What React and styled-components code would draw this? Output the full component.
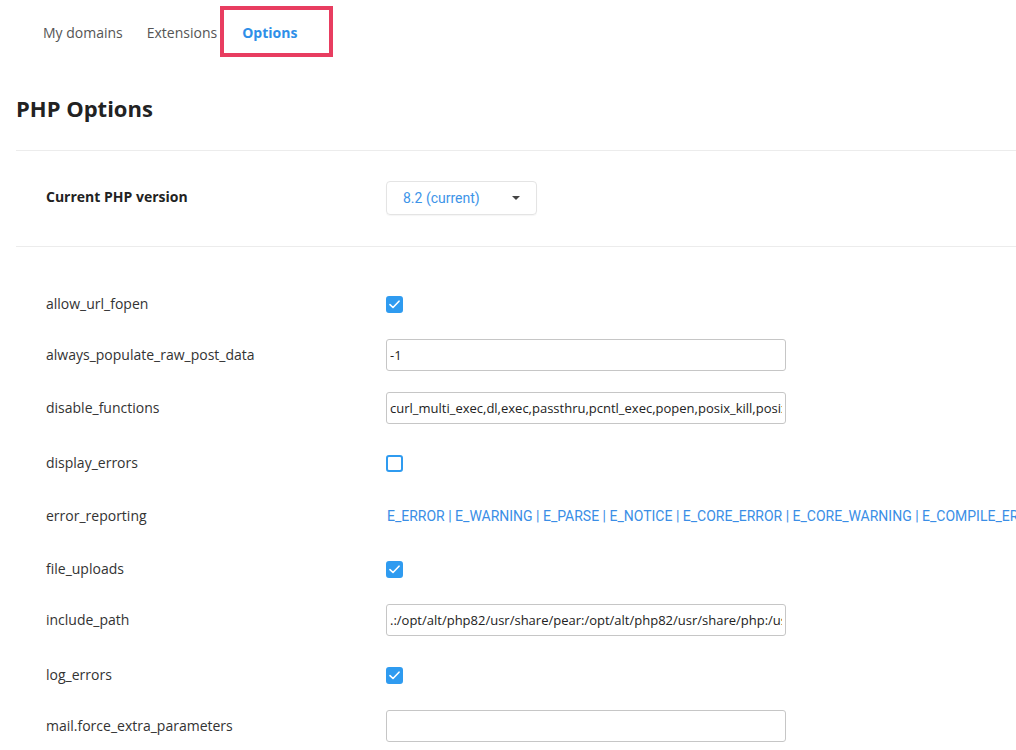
import React from "react";
import styled, { createGlobalStyle } from "styled-components";

const Global = createGlobalStyle`
  html, body { margin: 0; padding: 0; background: #fff; overflow: hidden; }
  body { font-family: "Open Sans", "Noto Sans", sans-serif; color: #333; }
  * { box-sizing: border-box; }
`;

const Page = styled.div`
  width: 1016px;
  height: 750px;
  overflow: hidden;
  padding-left: 16px;
`;

const Tabs = styled.nav`
  position: relative;
  display: flex;
  height: 66px;
  padding-left: 15px;
  align-items: flex-start;
  padding-top: 22px;
`;

const Tab = styled.div`
  padding: 0 12px;
  font-size: 14px;
  line-height: 22px;
  color: ${(p) => (p.$active ? "#2f8fe8" : "#555")};
  font-weight: ${(p) => (p.$active ? 700 : 400)};
  white-space: nowrap;
  margin-left: ${(p) => (p.$active ? "1px" : "0")};
`;

const Highlight = styled.div`
  position: absolute;
  left: 204px;
  top: 6px;
  width: 113px;
  height: 51px;
  border: 4px solid #e83d60;
  pointer-events: none;
`;

const Title = styled.h1`
  margin: 0;
  font-size: 22px;
  font-weight: 700;
  color: #222;
  line-height: 30px;
  padding: 27px 0 27px;
`;

const Section = styled.div`
  border-top: 1px solid #ececec;
  display: flex;
  align-items: center;
  padding: 30px 0 31px 30px;
`;

const OptionsList = styled.div`
  border-top: 1px solid #ececec;
  padding: 41px 0 0 30px;
  display: flex;
  flex-direction: column;
  gap: 21px;
`;

const Row = styled.div`
  display: flex;
  align-items: center;
  height: 32px;
  margin-top: ${(p) => (p.$field ? "-2px" : "0")};
  margin-bottom: ${(p) => (p.$field ? "2px" : "0")};
`;

const Label = styled.div`
  width: 340px;
  flex-shrink: 0;
  font-size: 14px;
  line-height: 20px;
  color: ${(p) => (p.$bold ? "#222" : "#333")};
  font-weight: ${(p) => (p.$bold ? 700 : 400)};
  margin-top: ${(p) => (p.$bold ? "-2px" : "0")};
`;

const Select = styled.div`
  width: 151px;
  height: 34px;
  border: 1px solid #e4e4e4;
  border-radius: 4px;
  display: flex;
  align-items: center;
  justify-content: space-between;
  padding: 0 16px 0 16px;
  font-family: Roboto, "Noto Sans", sans-serif;
  font-size: 14px;
  color: #3d94e8;
  box-shadow: 0 1px 1px rgba(0, 0, 0, 0.04);
`;

const Caret = styled.span`
  width: 0;
  height: 0;
  border-left: 4px solid transparent;
  border-right: 4px solid transparent;
  border-top: 4px solid #444;
`;

const Input = styled.input`
  width: 400px;
  height: 32px;
  border: 1px solid #c6c6c6;
  border-radius: 3px;
  padding: 0 3px;
  font-family: "Open Sans", "Noto Sans", sans-serif;
  font-size: 13px;
  color: #222;
  background: #fff;
  outline: none;
`;

const Box = styled.span`
  width: 17px;
  height: 17px;
  border-radius: 3px;
  display: inline-flex;
  align-items: center;
  justify-content: center;
  background: ${(p) => (p.$checked ? "#2f9bf0" : "#fff")};
  border: 2px solid #2f9bf0;
`;

const Flags = styled.div`
  font-family: Roboto, "Noto Sans", sans-serif;
  font-size: 14px;
  color: #3a8ee6;
  white-space: nowrap;
  padding-left: 1px;
`;

function Checkbox({ checked }) {
  return (
    <Box $checked={checked}>
      {checked && (
        <svg width="11" height="9" viewBox="0 0 11 9" fill="none">
          <path d="M1 4.6 L4 7.5 L10 1.2" stroke="#fff" strokeWidth="1.6" strokeLinecap="round" strokeLinejoin="round" />
        </svg>
      )}
    </Box>
  );
}

const options = [
  { name: "allow_url_fopen", type: "check", value: true },
  { name: "always_populate_raw_post_data", type: "input", value: "-1" },
  { name: "disable_functions", type: "input", value: "curl_multi_exec,dl,exec,passthru,pcntl_exec,popen,posix_kill,posix_mkfifo,posix_setpgid" },
  { name: "display_errors", type: "check", value: false },
  { name: "error_reporting", type: "flags", value: "E_ERROR | E_WARNING | E_PARSE | E_NOTICE | E_CORE_ERROR | E_CORE_WARNING | E_COMPILE_ERROR | E_COMPILE_WARNING" },
  { name: "file_uploads", type: "check", value: true },
  { name: "include_path", type: "input", value: ".:/opt/alt/php82/usr/share/pear:/opt/alt/php82/usr/share/php:/usr/share/pear" },
  { name: "log_errors", type: "check", value: true },
  { name: "mail.force_extra_parameters", type: "input", value: "" },
];

export default function App() {
  return (
    <>
      <Global />
      <Page>
        <Tabs>
          <Tab>My domains</Tab>
          <Tab>Extensions</Tab>
          <Tab $active>Options</Tab>
          <Highlight />
        </Tabs>
        <Title>PHP Options</Title>
        <Section>
          <Label $bold>Current PHP version</Label>
          <Select>
            <span>8.2 (current)</span>
            <Caret />
          </Select>
        </Section>
        <OptionsList>
          {options.map((o) => (
            <Row key={o.name} $field={o.type === "input"}>
              <Label>{o.name}</Label>
              {o.type === "check" && <Checkbox checked={o.value} />}
              {o.type === "input" && <Input defaultValue={o.value} readOnly />}
              {o.type === "flags" && <Flags>{o.value}</Flags>}
            </Row>
          ))}
        </OptionsList>
      </Page>
    </>
  );
}
